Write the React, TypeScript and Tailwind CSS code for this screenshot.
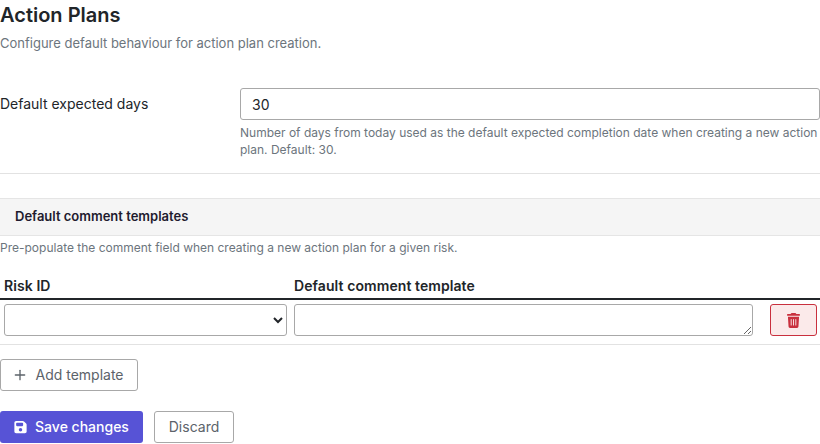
import React from 'react';
import { Plus } from 'lucide-react';

const SaveIcon = () => (
  <svg viewBox="0 0 448 512" className="w-[13px] h-[14px]" fill="currentColor">
    <path d="M64 32C28.7 32 0 60.7 0 96V416c0 35.3 28.7 64 64 64H384c35.3 0 64-28.7 64-64V173.3c0-17-6.7-33.3-18.7-45.3L352 50.7C340 38.7 323.700 32 306.700 32H64zm0 96c0-17.700 14.300-32 32-32H288c17.700 0 32 14.300 32 32v64c0 17.700-14.300 32-32 32H96c-17.700 0-32-14.300-32-32V128zM224 288a64 64 0 1 1 0 128 64 64 0 1 1 0-128z" />
  </svg>
);

const TrashIcon = () => (
  <svg viewBox="0 0 448 512" className="w-[13px] h-[15px]" fill="currentColor">
    <path d="M135.200 17.700L128 32H32C14.300 32 0 46.300 0 64S14.300 96 32 96H416c17.700 0 32-14.300 32-32s-14.300-32-32-32H320l-7.200-14.300C307.400 6.800 296.300 0 284.200 0H163.800c-12.100 0-23.200 6.800-28.600 17.700zM416 128H32L53.200 467c1.600 25.300 22.600 45 47.900 45H346.900c25.300 0 46.300-19.700 47.900-45L416 128zM144 208c8.800 0 16 7.200 16 16V416c0 8.800-7.200 16-16 16s-16-7.200-16-16V224c0-8.800 7.200-16 16-16zm80 0c8.800 0 16 7.200 16 16V416c0 8.800-7.200 16-16 16s-16-7.200-16-16V224c0-8.800 7.200-16 16-16zm80 0c8.800 0 16 7.200 16 16V416c0 8.800-7.200 16-16 16s-16-7.200-16-16V224c0-8.800 7.200-16 16-16z" />
  </svg>
);

export default function App() {
  return (
    <div className="w-[820px] h-[444px] overflow-hidden bg-white text-[#212529] font-['Inter',sans-serif]">
      <h2 className="text-[20px] leading-[30px] font-semibold">Action Plans</h2>
      <p className="mt-[3px] text-[13px] leading-[20px] text-[#6c757d]">Configure default behaviour for action plan creation.</p>

      <div className="mt-[35px] flex border-b border-[#e2e2e2] pb-[15px]">
        <label className="w-[240px] pt-[5px] text-[14px] leading-[22px]">Default expected days</label>
        <div className="flex-1">
          <input
            defaultValue="30"
            className="block w-full h-[32px] px-[11px] text-[14px] border border-[#a8a8a8] rounded-[3px] outline-none"
          />
          <p className="mt-[4px] text-[12px] leading-[17px] text-[#6c757d]">
            Number of days from today used as the default expected completion date when creating a new action plan. Default: 30.
          </p>
        </div>
      </div>

      <div className="mt-[24px] h-[38px] flex items-center px-[15px] bg-[#f5f5f5] border border-[#e5e5e5] border-x-0 text-[13px] font-semibold text-[#1f1b2e]">
        Default comment templates
      </div>
      <p className="mt-[3px] text-[12px] leading-[18px] text-[#6c757d]">Pre-populate the comment field when creating a new action plan for a given risk.</p>

      <div className="mt-[19px] flex h-[24px] border-b-2 border-[#212529] text-[14px] font-semibold leading-[19px] tracking-[0.08px]">
        <div className="w-[294px] pl-[4px]">Risk ID</div>
        <div>Default comment template</div>
      </div>
      <div className="flex items-start pt-[4px] pl-[4px] h-[45px] border-b border-[#e2e2e2]">
        <select className="w-[283px] h-[32px] bg-white border border-[#a8a8a8] rounded-[3px] text-[14px] outline-none" />
        <textarea className="ml-[7px] w-[459px] h-[32px] border border-[#a8a8a8] rounded-[3px] text-[14px] outline-none" />
        <button className="ml-[17px] w-[47px] h-[32px] flex items-center justify-center bg-[#fbeaea] border border-[#c9303e] rounded-[3px] text-[#c9303e]">
          <TrashIcon />
        </button>
      </div>

      <button className="mt-[14px] h-[32px] w-[138px] flex items-center justify-center gap-[7px] pb-[1px] border border-[#a8a8a8] rounded-[3px] text-[14px] text-[#5c636a]">
        <Plus size={16} strokeWidth={2} className="-ml-[2px]" />
        Add template
      </button>

      <div className="mt-[20px] flex gap-[11px]">
        <button className="h-[32px] w-[143px] flex items-center justify-center gap-[8px] pb-[1px] bg-[#5753d6] rounded-[3px] text-[14px] font-medium text-white">
          <SaveIcon />
          Save changes
        </button>
        <button className="h-[32px] w-[80px] pb-[1px] border border-[#a8a8a8] rounded-[3px] text-[14px] text-[#5c636a]">Discard</button>
      </div>
    </div>
  );
}
